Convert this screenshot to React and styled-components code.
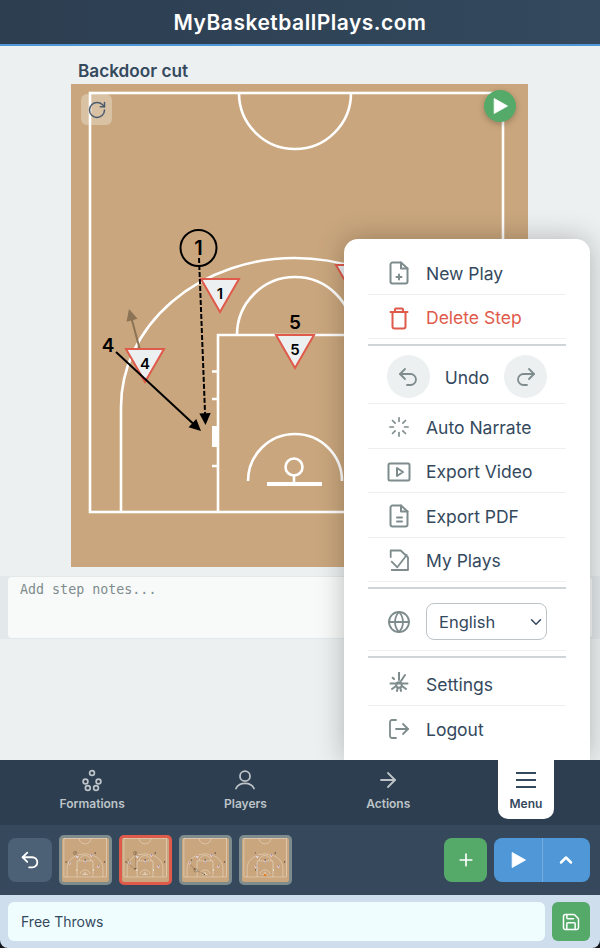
import React from 'react';
import styled, { createGlobalStyle } from 'styled-components';
import { ArrowRight, ChevronDown, ChevronUp, Globe, Loader, LogOut, Plus, Redo2, RotateCw, Save, Undo2 } from 'lucide-react';

const GlobalStyle = createGlobalStyle`
	* {
		box-sizing: border-box;
	}
	html, body {
		margin: 0;
		background: #14181c;
		font-family: Inter, "Liberation Sans", sans-serif;
	}
`;

const Page = styled.div`
	height: 100vh;
	display: flex;
	flex-direction: column;
	overflow: hidden;
	border-radius: 0 0 8px 8px;
`;

const Header = styled.header`
	height: 46px;
	flex: none;
	display: flex;
	align-items: center;
	justify-content: center;
	background: linear-gradient(90deg, #2c3e50, #34495e);
	border-bottom: 2px solid #4f97d7;
	color: #fff;
	font-size: 21px;
	font-weight: 600;
	letter-spacing: 0.5px;
`;

const Main = styled.main`
	position: relative;
	flex: 1;
	min-height: 0;
	background: #ecf0f1;
	padding-top: 15px;
`;

const CourtColumn = styled.div`
	width: 457px;
	margin: 0 0 9px 71px;
`;

const PlayTitle = styled.h2`
	margin: 0 0 4px 7px;
	font-size: 17.2px;
	line-height: 19px;
	font-weight: 600;
	color: #34495e;
`;

const CourtBox = styled.div`
	position: relative;
	height: 483px;
	background: #c9a67d;
`;

const CourtSvg = styled.svg`
	display: block;
	width: 100%;
	height: 100%;
`;

const ResetButton = styled.button`
	position: absolute;
	left: 10px;
	top: 10px;
	width: 31px;
	height: 31px;
	display: flex;
	align-items: center;
	justify-content: center;
	padding: 0;
	border: 0;
	border-radius: 6px;
	background: rgba(255, 255, 255, 0.3);
	color: #4b5c6e;
`;

const RunButton = styled.button`
	position: absolute;
	right: 12px;
	top: 6px;
	width: 32px;
	height: 32px;
	display: flex;
	align-items: center;
	justify-content: center;
	padding: 0;
	border: 0;
	border-radius: 50%;
	background: #55aa69;
	box-shadow: 0 2px 6px rgba(0, 0, 0, 0.25);
`;

const NotesStrip = styled.div`
	height: 63px;
	padding: 1px 8px;
	background: #e3e8ea;
`;

const Notes = styled.textarea`
	display: block;
	width: 100%;
	height: 61px;
	padding: 5px 12px;
	border: 0;
	border-radius: 4px;
	background: #f8fafa;
	resize: none;
	font-family: "DejaVu Sans Mono", monospace;
	font-size: 13.33px;
	&::placeholder {
		color: #7f8c8d;
	}
`;

const Menu = styled.nav`
	position: absolute;
	top: 193px;
	right: 10px;
	bottom: 0;
	width: 246px;
	padding: 11px 24px 0;
	background: #fff;
	border-radius: 14px 14px 0 0;
	box-shadow: 0 0 28px rgba(0, 0, 0, 0.25);
	z-index: 5;
`;

const MenuRow = styled.div`
	height: 44.5px;
	display: flex;
	align-items: center;
	gap: 15px;
	padding: 3px 0 0 19px;
	border-bottom: ${(p) => (p.$last ? '0' : '1px solid #ecf0f1')};
	font-size: 17.5px;
	color: ${(p) => (p.$danger ? '#e05a4b' : '#34495e')};
`;

const MenuIcon = styled.span`
	width: 24px;
	height: 24px;
	flex: none;
	display: flex;
	align-items: center;
	justify-content: center;
	color: ${(p) => (p.$danger ? '#e05a4b' : '#7f8c8d')};
`;

const Divider = styled.div`
	height: 2px;
	margin: 5px 0 ${(p) => p.$after || 0}px;
	background: #cfd4d6;
`;

const UndoRow = styled.div`
	height: 58px;
	display: flex;
	align-items: center;
	justify-content: center;
	gap: 15px;
	padding-top: 4px;
	border-bottom: 1px solid #ecf0f1;
	font-size: 17.5px;
	color: #34495e;
`;

const UndoLabel = styled.span`
	padding-top: 2px;
`;

const RoundButton = styled.button`
	width: 43px;
	height: 43px;
	display: flex;
	align-items: center;
	justify-content: center;
	padding: 0;
	border: 0;
	border-radius: 50%;
	background: #ecf0f1;
	color: #7f8c8d;
`;

const LanguageRow = styled.div`
	height: 62px;
	display: flex;
	align-items: center;
	gap: 15px;
	padding: 4px 0 0 19px;
	border-bottom: 1px solid #ecf0f1;
`;

const SelectWrap = styled.div`
	position: relative;
	width: 121px;
	color: #34495e;
	svg {
		position: absolute;
		right: 2px;
		top: 10px;
		pointer-events: none;
	}
`;

const LanguageSelect = styled.select`
	display: block;
	width: 100%;
	height: 37px;
	padding: 0 12px;
	appearance: none;
	background: #fff;
	border: 1px solid #bdc3c7;
	border-radius: 8px;
	color: #34495e;
	font-family: inherit;
	font-size: 16.5px;
`;

const TabBar = styled.div`
	position: relative;
	z-index: 6;
	height: 65px;
	flex: none;
	display: flex;
	align-items: flex-start;
	justify-content: space-around;
	padding: 0 8px 0 10px;
	background: #2c3e50;
`;

const Tab = styled.button`
	display: flex;
	flex-direction: column;
	align-items: center;
	gap: 5px;
	padding: 8px 12px 7px;
	border: 0;
	border-radius: 0 0 10px 10px;
	background: ${(p) => (p.$active ? '#fff' : 'transparent')};
	color: ${(p) => (p.$active ? '#34495e' : '#bdc3c7')};
	font-family: inherit;
	font-size: 12px;
	line-height: 14.5px;
	font-weight: 600;
`;

const Toolbar = styled.div`
	height: 70px;
	flex: none;
	display: flex;
	align-items: center;
	gap: 7px;
	padding: 0 10px 0 8px;
	background: #36495c;
`;

const ToolButton = styled.button`
	width: ${(p) => p.$width || 44}px;
	height: 44px;
	flex: none;
	display: flex;
	align-items: center;
	justify-content: center;
	padding: 0;
	border: 0;
	border-radius: 8px;
	background: ${(p) => p.$bg};
	color: #fff;
`;

const Thumb = styled.div`
	width: 53px;
	height: 50px;
	flex: none;
	overflow: hidden;
	border: 3px solid ${(p) => (p.$active ? '#e05a4b' : '#7f8c8d')};
	border-radius: 5px;
	background: #c9a67d;
`;

const Spacer = styled.div`
	flex: 1;
`;

const PlayGroup = styled.div`
	width: 96px;
	height: 44px;
	flex: none;
	display: flex;
	border-radius: 8px;
	overflow: hidden;
	background: #4f97d7;
`;

const PlayPart = styled.button`
	flex: 1;
	display: flex;
	align-items: center;
	justify-content: center;
	padding: 0;
	border: 0;
	border-left: ${(p) => (p.$split ? '1px solid #74ade0' : '0')};
	background: transparent;
	color: #fff;
`;

const NameBar = styled.div`
	height: 53px;
	flex: none;
	display: flex;
	align-items: center;
	gap: 7px;
	padding: 0 10px 0 8px;
	background: #cfdeed;
`;

const NameInput = styled.input`
	flex: 1;
	min-width: 0;
	height: 39px;
	padding: 0 13px;
	border: 0;
	border-radius: 6px;
	background: #f0fdff;
	color: #34495e;
	font-family: inherit;
	font-size: 14px;
`;

const SaveButton = styled.button`
	width: 38px;
	height: 39px;
	flex: none;
	display: flex;
	align-items: center;
	justify-content: center;
	padding: 0;
	border: 0;
	border-radius: 6px;
	background: #55aa69;
	color: #fff;
`;

const CourtText = styled.text`
	font-family: Inter, "Liberation Sans", sans-serif;
	font-size: ${(p) => p.$size}px;
	font-weight: ${(p) => p.$weight || 600};
	fill: #000;
	text-anchor: middle;
	dominant-baseline: central;
`;

const STARTING = [[1, 220, 279], [2, 355, 265], [3, 424, 385], [4, 145, 349], [5, 295, 335]];

const steps = [
	{
		players: STARTING,
		labels: [[1, 198, 248, true], [2, 392, 254], [3, 482, 344], [4, 108, 345], [5, 295, 322]],
		arrows: [],
	},
	{
		players: STARTING,
		labels: [[1, 198.5, 248, true], [2, 392, 254], [3, 482, 344], [4, 108, 345], [5, 295, 322]],
		arrows: [
			{ from: [140, 350], to: [129, 309], color: '#8b7355', under: true },
			{ from: [199, 258], to: [205.5, 425], dashed: true },
			{ from: [116, 352], to: [201, 431] },
		],
	},
	{
		players: STARTING,
		labels: [[1, 205, 440, true], [2, 392, 254], [3, 482, 344], [4, 160, 330], [5, 295, 322]],
		arrows: [
			{ from: [150, 372], to: [195, 430] },
			{ from: [222, 445], to: [295, 488] },
		],
	},
	{
		players: [[1, 220, 279], [2, 355, 265], [3, 424, 385], [4, 204, 385], [5, 295, 335]],
		labels: [[1, 198, 250], [2, 392, 254], [3, 482, 344], [4, 204, 432], [5, 295, 322]],
		arrows: [],
		ball: [295, 490],
	},
];

const Arrow = ({ from, to, color = '#000', dashed }) => {
	const angle = Math.atan2(to[1] - from[1], to[0] - from[0]);
	const head = [0.45, -0.45].map((turn) => [
		to[0] - 13 * Math.cos(angle + turn),
		to[1] - 13 * Math.sin(angle + turn),
	]);
	const end = [to[0] - 8 * Math.cos(angle), to[1] - 8 * Math.sin(angle)];
	return (
		<g>
			<line
				x1={from[0]}
				y1={from[1]}
				x2={end[0]}
				y2={end[1]}
				stroke={color}
				strokeWidth="2"
				strokeDasharray={dashed ? '5 2' : undefined}
			/>
			<polygon points={`${to.join(',')} ${head[0].join(',')} ${head[1].join(',')}`} fill={color} />
		</g>
	);
};

const CourtDrawing = ({ step, line = 2.6 }) => (
	<>
		<g fill="none" stroke="#fff" strokeWidth={line}>
			<rect x="90" y="93" width="413" height="419" />
			<path d="M239 93 A56 56 0 0 0 351 93" />
			<path d="M121 512 V407 A174 149 0 0 1 469 407 V512" />
			<path d="M218 512 V335 H372 V512" />
			<path d="M237 335 A58 58 0 0 1 353 335" />
			<path d="M248 481 A47 47 0 0 1 342 481" />
			<circle cx="294" cy="467" r="8.5" />
			<path d="M294 476 V484" />
			<path d="M267 484 H322" strokeWidth={line + 1.2} />
			<path d="M212 371.5 H218 M212 399 H218 M212 466 H218 M372 371.5 H378 M372 399 H378 M372 466 H378" />
		</g>
		<rect x="212" y="426" width="6" height="21" fill="#fff" />
		<rect x="372" y="426" width="6" height="21" fill="#fff" />
		{step.arrows.filter((a) => a.under).map((a) => (
			<Arrow key={a.to.join()} {...a} />
		))}
		{step.players.map(([num, x, y]) => (
			<g key={num}>
				<polygon
					points={`${x - 19},${y} ${x + 19},${y} ${x},${y + 33}`}
					fill="#ecf0f1"
					stroke="#e05a4b"
					strokeWidth="2"
				/>
				<CourtText x={x} y={y + 14} $size={15}>{num}</CourtText>
			</g>
		))}
		{step.labels.map(([num, x, y, ringed]) => (
			<g key={num}>
				{ringed && <circle cx={x} cy={y} r="18" fill="none" stroke="#000" strokeWidth="2" />}
				<CourtText x={x} y={y} $size={ringed ? 20 : 19}>{num}</CourtText>
			</g>
		))}
		{step.arrows.filter((a) => !a.under).map((a) => (
			<Arrow key={a.to.join()} {...a} />
		))}
		{step.ball && <circle cx={step.ball[0]} cy={step.ball[1]} r="14" fill="#e67e22" />}
	</>
);

const Glyph = ({ size = 24, width = 2, children }) => (
	<svg
		width={size}
		height={size}
		viewBox="0 0 24 24"
		fill="none"
		stroke="currentColor"
		strokeWidth={width}
		strokeLinecap="round"
		strokeLinejoin="round"
	>
		{children}
	</svg>
);

const NewPlayIcon = () => (
	<Glyph>
		<path d="M14 1.5H5.5a2 2 0 0 0-2 2v17a2 2 0 0 0 2 2h13a2 2 0 0 0 2-2V7.5z" />
		<path d="M14 1.5v6h6.5M12 13.5v5M9.5 16h5" />
	</Glyph>
);

const TrashIcon = () => (
	<Glyph>
		<path d="M3.5 6h17M8 6V3.5a1 1 0 0 1 1-1h6a1 1 0 0 1 1 1V6" />
		<path d="M5.5 6v14.5a2 2 0 0 0 2 2h9a2 2 0 0 0 2-2V6" />
	</Glyph>
);

const VideoIcon = () => (
	<Glyph>
		<rect x="1.5" y="3.5" width="21" height="17" rx="1.5" />
		<path d="M10 8l6 4-6 4z" />
	</Glyph>
);

const PdfIcon = () => (
	<Glyph>
		<path d="M14 1.5H5.5a2 2 0 0 0-2 2v17a2 2 0 0 0 2 2h13a2 2 0 0 0 2-2V7.5z" />
		<path d="M14 1.5v6h6.5M10 13.5h5M10 17.5h5" />
	</Glyph>
);

const MyPlaysIcon = () => (
	<Glyph width={1.8}>
		<path d="M3.7 8V1.5h10L21 8.5V21H4.7" />
		<path d="M4.7 12.7l5.6 5.6L19.7 6" />
	</Glyph>
);

const SettingsIcon = () => (
	<Glyph>
		<circle cx="12" cy="13" r="2.8" />
		<path d="M12 .5V8M18 3l-4 6M5.7 5.7L7 7M3.5 11.5h17M5 17l4-3M19 17l-4-3M10 19l.6-3M14 19l-.6-3" />
	</Glyph>
);

const FormationsIcon = () => (
	<Glyph width={1.7}>
		<circle cx="12" cy="5" r="2.4" />
		<circle cx="5.5" cy="13.5" r="2.4" />
		<circle cx="18.5" cy="13.5" r="2.4" />
		<circle cx="7.8" cy="20" r="2.4" />
		<circle cx="16" cy="20" r="2.4" />
	</Glyph>
);

const PlayerIcon = () => (
	<Glyph width={1.8}>
		<circle cx="12" cy="8.2" r="5" />
		<path d="M3 20.5a9.5 7.5 0 0 1 18 0" />
	</Glyph>
);

const BurgerIcon = () => (
	<svg width="24" height="24" viewBox="0 0 24 24" stroke="currentColor" strokeWidth="2">
		<path d="M2 5h20M2 12h20M2 19h20" />
	</svg>
);

const PlayShape = ({ size, fill = '#fff' }) => (
	<svg width={size} height={size} viewBox="0 0 24 24">
		<path d="M5 3l16 9-16 9z" fill={fill} stroke={fill} strokeLinejoin="round" />
	</svg>
);

const MENU_TOP = [
	{ label: 'New Play', icon: <NewPlayIcon /> },
	{ label: 'Delete Step', icon: <TrashIcon />, danger: true },
];

const MENU_MIDDLE = [
	{ label: 'Auto Narrate', icon: <Loader size={22} strokeWidth={1.8} /> },
	{ label: 'Export Video', icon: <VideoIcon /> },
	{ label: 'Export PDF', icon: <PdfIcon /> },
	{ label: 'My Plays', icon: <MyPlaysIcon /> },
];

const MenuItem = ({ item, last }) => (
	<MenuRow $danger={item.danger} $last={last}>
		<MenuIcon $danger={item.danger}>{item.icon}</MenuIcon>
		{item.label}
	</MenuRow>
);

const App = () => (
	<Page>
		<GlobalStyle />
		<Header>MyBasketballPlays.com</Header>
		<Main>
			<CourtColumn>
				<PlayTitle>Backdoor cut</PlayTitle>
				<CourtBox>
					<CourtSvg viewBox="71 84 457 483">
						<CourtDrawing step={steps[1]} />
					</CourtSvg>
					<ResetButton>
						<RotateCw size={20} strokeWidth={1.8} />
					</ResetButton>
					<RunButton>
						<PlayShape size={20} />
					</RunButton>
				</CourtBox>
			</CourtColumn>
			<NotesStrip>
				<Notes placeholder="Add step notes..." />
			</NotesStrip>
			<Menu>
				{MENU_TOP.map((item) => (
					<MenuItem key={item.label} item={item} />
				))}
				<Divider />
				<UndoRow>
					<RoundButton>
						<Undo2 size={24} strokeWidth={1.8} />
					</RoundButton>
					<UndoLabel>Undo</UndoLabel>
					<RoundButton>
						<Redo2 size={24} strokeWidth={1.8} />
					</RoundButton>
				</UndoRow>
				{MENU_MIDDLE.map((item) => (
					<MenuItem key={item.label} item={item} />
				))}
				<Divider />
				<LanguageRow>
					<MenuIcon>
						<Globe size={24} strokeWidth={1.8} />
					</MenuIcon>
					<SelectWrap>
						<LanguageSelect defaultValue="English">
							<option>English</option>
						</LanguageSelect>
						<ChevronDown size={18} strokeWidth={2} />
					</SelectWrap>
				</LanguageRow>
				<Divider $after={3} />
				<MenuItem item={{ label: 'Settings', icon: <SettingsIcon /> }} />
				<MenuItem item={{ label: 'Logout', icon: <LogOut size={24} strokeWidth={1.8} /> }} last />
			</Menu>
		</Main>
		<TabBar>
			<Tab>
				<FormationsIcon />
				Formations
			</Tab>
			<Tab>
				<PlayerIcon />
				Players
			</Tab>
			<Tab>
				<ArrowRight size={24} strokeWidth={1.8} />
				Actions
			</Tab>
			<Tab $active>
				<BurgerIcon />
				Menu
			</Tab>
		</TabBar>
		<Toolbar>
			<ToolButton $bg="#4c6076">
				<Undo2 size={22} strokeWidth={2} />
			</ToolButton>
			{steps.map((step, i) => (
				<Thumb key={i} $active={i === 1}>
					<CourtSvg viewBox="71 84 457 483" preserveAspectRatio="none">
						<CourtDrawing step={step} line={3.5} />
					</CourtSvg>
				</Thumb>
			))}
			<Spacer />
			<ToolButton $bg="#55aa69" $width={43}>
				<Plus size={20} strokeWidth={2} />
			</ToolButton>
			<PlayGroup>
				<PlayPart>
					<PlayShape size={20} />
				</PlayPart>
				<PlayPart $split>
					<ChevronUp size={20} strokeWidth={3} />
				</PlayPart>
			</PlayGroup>
		</Toolbar>
		<NameBar>
			<NameInput defaultValue="Free Throws" />
			<SaveButton>
				<Save size={20} strokeWidth={1.8} />
			</SaveButton>
		</NameBar>
	</Page>
);

export default App;
